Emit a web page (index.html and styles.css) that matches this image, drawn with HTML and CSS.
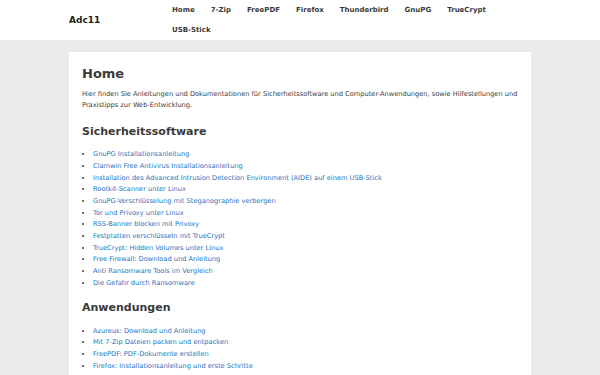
FILE: index.html
```html
<html>
<head>
  <meta http-equiv="Content-type" content="text/html;charset=UTF-8">
  <meta name="viewport" content="width=device-width, initial-scale=1.0"/>
  <title>Adc11 - Home</title>
  <link rel="stylesheet" href="styles.css">
</head>
<body>
  <div id="header">
    <div class="inside">
      <div class="logo">Adc11</div>
      <ul class="menu">
        <li><a href="#">Home</a></li>
        <li><a href="#">7-Zip</a></li>
        <li><a href="#">FreePDF</a></li>
        <li><a href="#">Firefox</a></li>
        <li><a href="#">Thunderbird</a></li>
        <li><a href="#">GnuPG</a></li>
        <li><a href="#">TrueCrypt</a></li>
        <li><a href="#">USB-Stick</a></li>
      </ul>
    </div>
  </div>
  <div id="main">
    <div class="content">
      <h1>Home</h1>
      <p>Hier finden Sie Anleitungen und Dokumentationen für Sicherheitssoftware und Computer-Anwendungen, sowie Hilfestellungen und Praxistipps zur Web-Entwicklung.</p>

      <h2>Sicherheitssoftware</h2>
      <ul class="links">
        <li><a href="#">GnuPG Installationsanleitung</a></li>
        <li><a href="#">Clamwin Free Antivirus Installationsanleitung</a></li>
        <li><a href="#">Installation des Advanced Intrusion Detection Environment (AIDE) auf einem USB-Stick</a></li>
        <li><a href="#">Rootkit-Scanner unter Linux</a></li>
        <li><a href="#">GnuPG-Verschlüsselung mit Steganographie verbergen</a></li>
        <li><a href="#">Tor und Privoxy unter Linux</a></li>
        <li><a href="#">RSS-Banner blocken mit Privoxy</a></li>
        <li><a href="#">Festplatten verschlüsseln mit TrueCrypt</a></li>
        <li><a href="#">TrueCrypt: Hidden Volumes unter Linux</a></li>
        <li><a href="#">Free Firewall: Download und Anleitung</a></li>
        <li><a href="#">Anti Ransomware Tools im Vergleich</a></li>
        <li><a href="#">Die Gefahr durch Ransomware</a></li>
      </ul>

      <h2>Anwendungen</h2>
      <ul class="links">
        <li><a href="#">Azureus: Download und Anleitung</a></li>
        <li><a href="#">Mit 7-Zip Dateien packen und entpacken</a></li>
        <li><a href="#">FreePDF: PDF-Dokumente erstellen</a></li>
        <li><a href="#">Firefox: Installationsanleitung und erste Schritte</a></li>
      </ul>
    </div>
  </div>
</body>
</html>
```

FILE: styles.css
```css
body{
    margin:0;
    background:#ebebeb;
    color:#3a3a3a;
    font-family:"DejaVu Sans", sans-serif;
    font-size:6.65px;
}
a{
    color:#1e73be;
    text-decoration:none;
}
#header{
    background:white;
    height:40px;
}
#header .inside{
    width:462px;
    margin:0 auto;
    display:flex;
    align-items:center;
    height:40px;
}
.logo{
    font-size:9px;
    font-weight:bold;
    color:#222;
    width:95px;
}
.menu{
    list-style:none;
    margin:0;
    padding:0;
    display:flex;
    flex-wrap:wrap;
    flex:1;
}
.menu li a{
    display:block;
    padding:0 8px;
    line-height:20px;
    font-size:7px;
    font-weight:bold;
    color:#3a3a3a;
}
#main{
    padding-top:12px;
}
.content{
    width:436px;
    margin:0 auto;
    background:white;
    padding:14px 13px 13px 13px;
}
h1{
    font-size:13px;
    line-height:15.6px;
    margin:0 0 7.5px 0;
}
p{
    line-height:11.3px;
    margin:0 0 13px 0;
}
h2{
    font-size:11px;
    line-height:13.2px;
    margin:0 0 11.5px 0;
}
ul.links{
    margin:0 0 11.6px 0;
    padding-left:11px;
}
ul.links li{
    line-height:11.65px;
}
```
